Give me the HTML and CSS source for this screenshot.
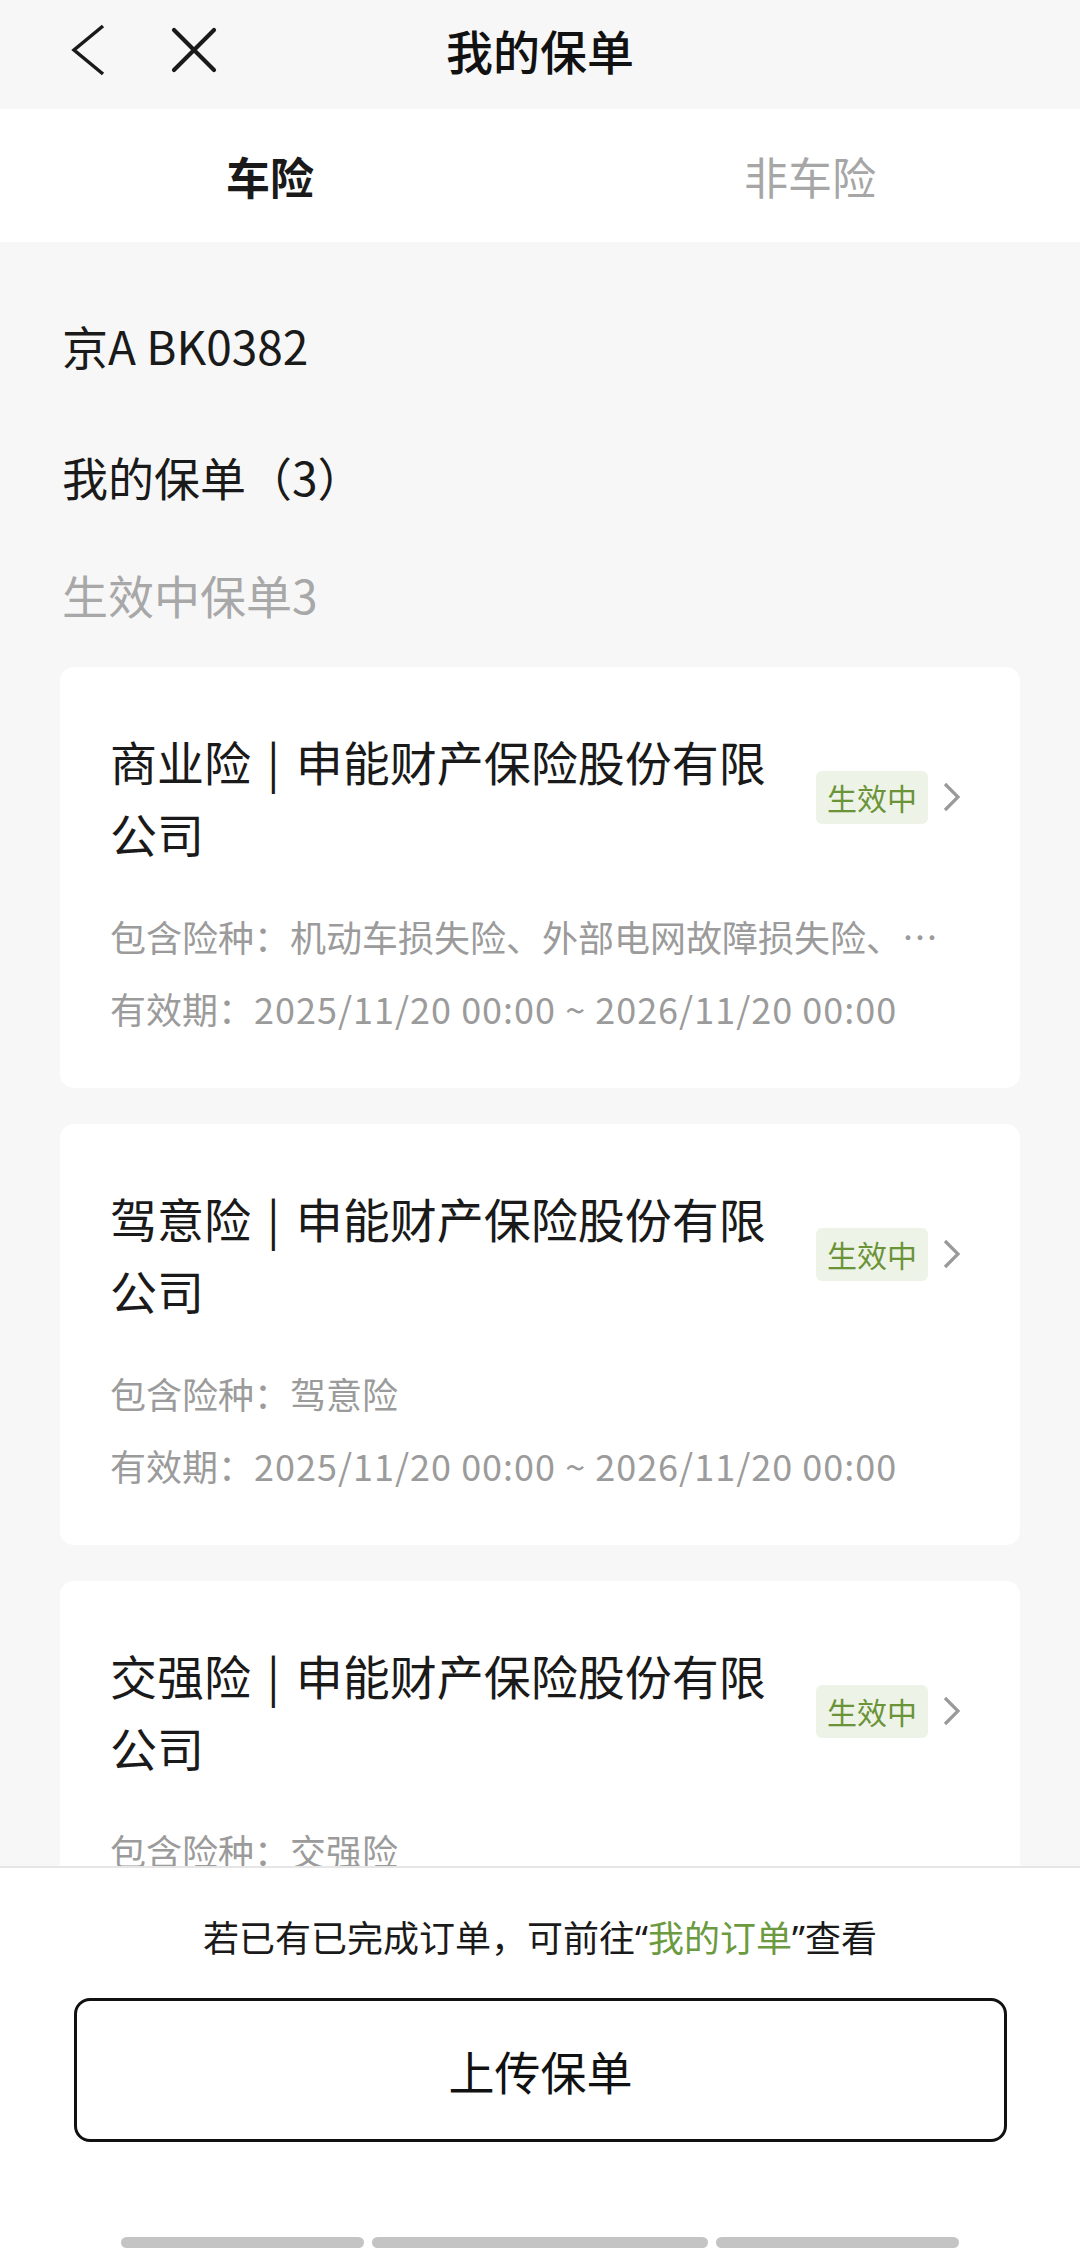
FILE: index.html
```html
<!DOCTYPE html>
<html lang="zh-CN">
<head>
<meta charset="utf-8">
<title>我的保单</title>
<link rel="stylesheet" href="styles.css">
</head>
<body>
<div class="page">
  <header class="navbar">
    <div class="nav-left">
      <svg class="icon-back" width="34" height="52" viewBox="0 0 34 52"><polyline points="32,2 3,26 32,50" fill="none" stroke="#1a1a1a" stroke-width="3.5" stroke-linejoin="miter"/></svg>
      <svg class="icon-close" width="46" height="46" viewBox="0 0 46 46"><path d="M3 3 L43 43 M43 3 L3 43" fill="none" stroke="#1a1a1a" stroke-width="4.2" stroke-linecap="round"/></svg>
    </div>
    <div class="nav-title">我的保单</div>
    <div class="nav-right"></div>
  </header>

  <nav class="tabs">
    <div class="tab tab-active">车险</div>
    <div class="tab">非车险</div>
  </nav>

  <main class="content">
    <div class="plate">京A BK0382</div>
    <div class="section-title">我的保单（3）</div>
    <div class="section-sub">生效中保单3</div>

    <div class="card">
      <div class="card-head">
        <div class="card-title">商业险<span class="sep">|</span>申能财产保险股份有限公司</div>
        <span class="badge">生效中</span>
        <svg class="chev" width="20" height="30" viewBox="0 0 20 30"><polyline points="3,2 16,15 3,28" fill="none" stroke="#9a9a9a" stroke-width="3.2"/></svg>
      </div>
      <div class="desc ellipsis">包含险种：机动车损失险、外部电网故障损失险、机动车第三者责任险、机动车车上人员责任险</div>
      <div class="desc">有效期：<span class="date">2025/11/20 00:00 ~ 2026/11/20 00:00</span></div>
    </div>

    <div class="card">
      <div class="card-head">
        <div class="card-title">驾意险<span class="sep">|</span>申能财产保险股份有限公司</div>
        <span class="badge">生效中</span>
        <svg class="chev" width="20" height="30" viewBox="0 0 20 30"><polyline points="3,2 16,15 3,28" fill="none" stroke="#9a9a9a" stroke-width="3.2"/></svg>
      </div>
      <div class="desc ellipsis">包含险种：驾意险</div>
      <div class="desc">有效期：<span class="date">2025/11/20 00:00 ~ 2026/11/20 00:00</span></div>
    </div>

    <div class="card">
      <div class="card-head">
        <div class="card-title">交强险<span class="sep">|</span>申能财产保险股份有限公司</div>
        <span class="badge">生效中</span>
        <svg class="chev" width="20" height="30" viewBox="0 0 20 30"><polyline points="3,2 16,15 3,28" fill="none" stroke="#9a9a9a" stroke-width="3.2"/></svg>
      </div>
      <div class="desc ellipsis">包含险种：交强险</div>
      <div class="desc">有效期：<span class="date">2025/11/20 00:00 ~ 2026/11/20 00:00</span></div>
    </div>
  </main>

  <footer class="footer">
    <p class="hint">若已有已完成订单，可前往<span class="q">“</span><span class="link">我的订单</span><span class="q">”</span>查看</p>
    <button class="upload-btn">上传保单</button>
    <div class="indicator">
      <span class="bar bar-side"></span>
      <span class="bar bar-mid"></span>
      <span class="bar bar-side"></span>
    </div>
  </footer>
</div>
</body>
</html>
```

FILE: styles.css
```css
* {
  box-sizing: border-box;
}

html, body {
  margin: 0;
  padding: 0;
}

body {
  width: 1080px;
  height: 2252px;
  overflow: hidden;
  background: #f7f7f7;
  font-family: "Noto Sans CJK SC", "Noto Sans", sans-serif;
  color: #1a1a1a;
}

.page {
  display: flex;
  flex-direction: column;
  height: 2252px;
}

/* ---------- nav bar ---------- */
.navbar {
  display: grid;
  grid-template-columns: 1fr auto 1fr;
  align-items: center;
  height: 109px;
  padding-bottom: 9px;
  background: #f7f7f7;
  flex-shrink: 0;
}

.nav-left {
  display: flex;
  align-items: center;
  padding-left: 71px;
  gap: 66px;
}

.icon-back,
.icon-close {
  display: block;
}

.nav-title {
  font-size: 47px;
  font-weight: 500;
  line-height: 60px;
  color: #111;
}

/* ---------- tabs ---------- */
.tabs {
  display: flex;
  height: 133px;
  background: #fff;
  flex-shrink: 0;
}

.tab {
  flex: 1;
  display: flex;
  align-items: center;
  justify-content: center;
  font-size: 44px;
  color: #a6a6a6;
}

.tab-active {
  color: #1a1a1a;
  font-weight: 700;
}

/* ---------- content ---------- */
.content {
  flex: 1;
  overflow: hidden;
  padding: 71px 60px 0 60px;
  display: flex;
  flex-direction: column;
}

.plate,
.section-title,
.section-sub {
  font-size: 46px;
  line-height: 64px;
  padding-left: 2px;
  flex-shrink: 0;
}

.section-title {
  margin-top: 67px;
}

.section-sub {
  margin-top: 54px;
  color: #a8a8a8;
}

.card {
  flex-shrink: 0;
  background: #fff;
  border-radius: 14px;
  padding: 58px 58px 44px 50px;
  margin-top: 41px;
}

.card + .card {
  margin-top: 36px;
}

.card-head {
  display: flex;
  align-items: center;
}

.card-title {
  flex: 1;
  min-width: 0;
  font-size: 47px;
  line-height: 72px;
  margin-right: 24px;
  color: #1a1a1a;
}

.sep {
  margin: 0 16px;
}

.badge {
  flex-shrink: 0;
  background: #eef3e7;
  color: #6b9438;
  font-size: 30px;
  line-height: 41px;
  padding: 6px 11px;
  border-radius: 6px;
}

.chev {
  flex-shrink: 0;
  display: block;
  margin-left: 14px;
}

.desc {
  font-size: 36px;
  line-height: 72px;
  color: #9b9b9b;
  white-space: nowrap;
}

.date {
  letter-spacing: 1px;
}

.card-head + .desc {
  margin-top: 31px;
}

.ellipsis {
  overflow: hidden;
  text-overflow: ellipsis;
  margin-right: 10px;
}

/* ---------- footer ---------- */
.footer {
  flex-shrink: 0;
  background: #fff;
  border-top: 2px solid #e6e6e6;
  padding: 44px 0 4px;
  display: flex;
  flex-direction: column;
  align-items: center;
}

.hint {
  margin: 0;
  font-size: 36px;
  line-height: 48px;
  color: #1a1a1a;
}

.q {
  font-family: "Noto Sans", sans-serif;
}

.link {
  color: #6b9a3f;
}

.upload-btn {
  margin-top: 35px;
  width: 933px;
  height: 144px;
  margin-left: 1px;
  border: 3px solid #111;
  border-radius: 16px;
  background: #fff;
  font-family: inherit;
  font-size: 46px;
  color: #111;
  padding: 0;
}

.indicator {
  margin-top: 95px;
  display: flex;
  gap: 8px;
}

.bar {
  display: block;
  height: 11px;
  border-radius: 6px;
  background: #c4c4c4;
}

.bar-side {
  width: 243px;
}

.bar-mid {
  width: 336px;
}
```
